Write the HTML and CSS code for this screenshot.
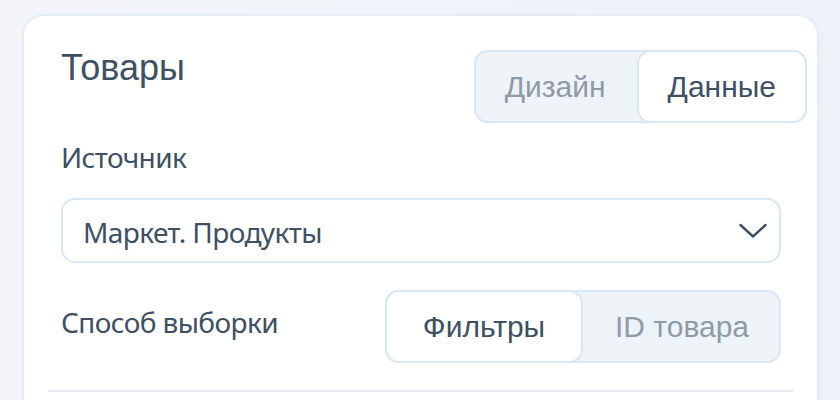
FILE: index.html
```html
<!DOCTYPE html>
<html lang="ru">
<head>
  <meta charset="UTF-8" />
  <meta name="viewport" content="width=device-width, initial-scale=1.0" />
  <title>Товары — настройки блока</title>
  <link rel="stylesheet" href="styles.css">
</head>
<body>
  <div id="panel">
    <div class="panel-head">
      <h1>Товары</h1>
      <div class="segmented">
        <button class="seg-btn">Дизайн</button>
        <button class="seg-btn active">Данные</button>
      </div>
    </div>

    <div class="field-label">Источник</div>
    <div class="select">
      <span>Маркет. Продукты</span>
      <svg class="chevron" width="28" height="16" viewBox="0 0 28 16">
        <polyline points="1.5,2 14,13.5 26.5,2" fill="none" stroke="currentColor" stroke-width="2.4" stroke-linecap="round" stroke-linejoin="round" />
      </svg>
    </div>

    <div class="field-row">
      <div class="field-label inline">Способ выборки</div>
      <div class="segmented wide">
        <button class="seg-btn active">Фильтры</button>
        <button class="seg-btn">ID товара</button>
      </div>
    </div>

    <div class="divider"></div>
  </div>
</body>
</html>
```

FILE: styles.css
```css
html, body {
  margin: 0;
  padding: 0;
  height: 100%;
  overflow: hidden;
}
body {
  background: linear-gradient(to right, #f3f5f9, #edf1f8);
  padding: 14px 21px 0 22px;
  box-sizing: border-box;
  color: #3e5063;
}
#panel {
  background: #fff;
  border: 2px solid #e6ecf5;
  border-radius: 22px;
  padding: 31px 36px 60px 37px;
  min-height: 500px;
}
.panel-head {
  display: flex;
  justify-content: space-between;
  align-items: flex-start;
  margin-right: -26px;
}
.panel-head h1 {
  margin: 0;
  font-family: "Liberation Sans", Arial, sans-serif;
  font-size: 36px;
  font-weight: normal;
  color: #3e5063;
}
.segmented {
  display: flex;
  margin-top: 3px;
  background: #eef3f8;
  border-radius: 14px;
  box-shadow: inset 0 0 0 2px #d9e8f6;
}
.seg-btn {
  font-family: "Liberation Sans", Arial, sans-serif;
  font-size: 30px;
  line-height: 35px;
  padding: 17px 29px;
  border: 2px solid transparent;
  border-radius: 14px;
  background: none;
  color: #8f9aa7;
  cursor: pointer;
}
.seg-btn.active {
  background: #fff;
  border-color: #d9e8f6;
  color: #3e5063;
}
.segmented.wide {
  width: 396px;
  margin-top: 0;
}
.segmented.wide .seg-btn {
  flex: 1;
  padding: 17px 0;
}
.field-label {
  margin-top: 15px;
  font-family: "Noto Sans", "Open Sans", sans-serif;
  font-size: 28px;
  letter-spacing: -0.6px;
  color: #3e5063;
}
.field-label.inline {
  margin-top: 0;
  margin-bottom: 9px;
}
.select {
  margin-top: 22px;
  height: 65px;
  box-sizing: border-box;
  display: flex;
  align-items: center;
  justify-content: space-between;
  padding: 0 12px 0 20px;
  border: 2px solid #d9e8f6;
  border-radius: 14px;
  font-family: "Noto Sans", "Open Sans", sans-serif;
  font-size: 28px;
  letter-spacing: -0.6px;
  color: #3e5063;
}
.select span {
  margin-top: 2px;
}
.chevron {
  color: #3e5063;
}
.field-row {
  margin-top: 27px;
  display: flex;
  justify-content: space-between;
  align-items: center;
}
.divider {
  margin: 27px -12px 0 -13px;
  height: 2px;
  background: #e4eaf3;
}
```
